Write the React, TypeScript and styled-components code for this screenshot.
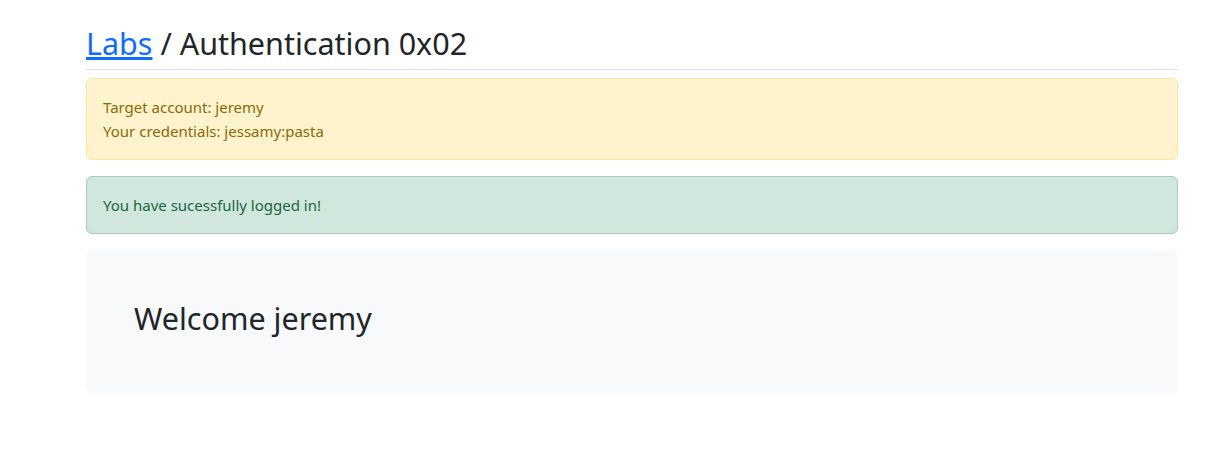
import React from 'react'
import styled, { createGlobalStyle } from 'styled-components'

const GlobalStyle = createGlobalStyle`
  body {
    margin: 0;
    background: #fff;
    font-family: "Noto Sans", "DejaVu Sans", sans-serif;
    font-size: 16px;
    line-height: 1.5;
    color: #212529;
  }
`

const Page = styled.main`
  padding: 25px 37px 0 86px;
`

const Title = styled.h2`
  margin: 0 0 8px;
  padding-bottom: 7px;
  font-size: 30.5px;
  font-weight: 400;
  line-height: 1.2;
  border-bottom: 1px solid #dee2e6;
  a {
    color: #0d6efd;
    text-decoration: underline;
  }
`

const Alert = styled.div<{ $variant: 'warning' | 'success' }>`
  padding: 16px;
  margin-bottom: 16px;
  border-radius: 6px;
  border: 1px solid ${p => (p.$variant === 'warning' ? '#ffe69c' : '#a3cfbb')};
  background: ${p => (p.$variant === 'warning' ? '#fff3cd' : '#d1e7dd')};
  color: ${p => (p.$variant === 'warning' ? '#8a6a05' : '#17663f')};
  font-size: 15px;
  line-height: 24px;
`

const Panel = styled.section`
  padding: 50px 48px 48px;
  background: #f8f9fa;
  border-radius: 6px;
  h3 {
    margin: 0 0 9px;
    font-size: 30.5px;
    font-weight: 400;
    line-height: 36px;
  }
`

export default function App() {
  return (
    <>
      <GlobalStyle />
      <Page>
        <Title>
          <a href="#">Labs</a> / Authentication 0x02
        </Title>
        <Alert $variant="warning">
          Target account: jeremy
          <br />
          Your credentials: jessamy:pasta
        </Alert>
        <Alert $variant="success">You have sucessfully logged in!</Alert>
        <Panel>
          <h3>Welcome jeremy</h3>
        </Panel>
      </Page>
    </>
  )
}
